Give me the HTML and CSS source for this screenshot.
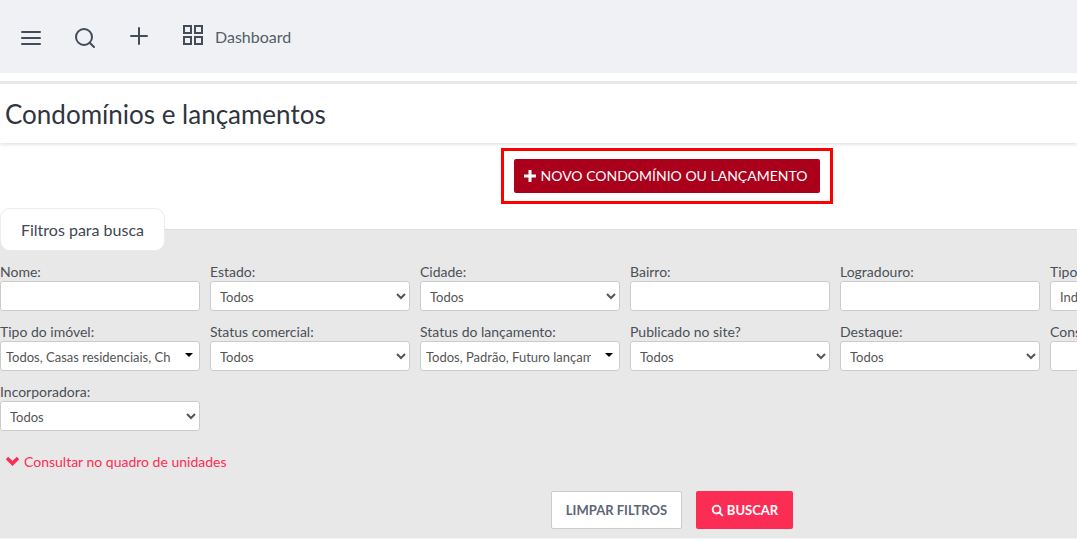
FILE: index.html
```html
<!DOCTYPE html>
<html lang="pt-BR">
<head>
<meta charset="utf-8">
<title>Condomínios e lançamentos</title>
<link rel="stylesheet" href="styles.css">
</head>
<body>
<header class="topbar">
  <svg class="icon icon-menu" viewBox="0 0 24 24"><path d="M3 6h18M3 12h18M3 18h18"/></svg>
  <svg class="icon icon-search" viewBox="0 0 24 24"><circle cx="11" cy="11" r="8"/><path d="M21 21l-4.3-4.3"/></svg>
  <svg class="icon icon-plus" viewBox="0 0 24 24"><path d="M12 4v16M4 12h16"/></svg>
  <svg class="icon icon-grid" viewBox="0 0 24 24"><rect x="3" y="3" width="7" height="7"/><rect x="14" y="3" width="7" height="7"/><rect x="3" y="14" width="7" height="7"/><rect x="14" y="14" width="7" height="7"/></svg>
  <span class="dash">Dashboard</span>
</header>
<div class="title-bar"><h1>Condomínios e lançamentos</h1></div>
<div class="action-row">
  <div class="highlight">
    <button class="btn-new" type="button"><svg class="plus-solid" viewBox="0 0 12 12"><path d="M4.500 0h3v4.500H12v3H7.500V12h-3V7.500H0v-3h4.500z"/></svg>NOVO CONDOMÍNIO OU LANÇAMENTO</button>
  </div>
</div>
<div class="tab-row"><div class="tab">Filtros para busca</div></div>
<section class="panel">
  <div class="filters">
    <div class="field"><label>Nome:</label><input type="text"></div>
    <div class="field"><label>Estado:</label><select><option>Todos</option></select></div>
    <div class="field"><label>Cidade:</label><select><option>Todos</option></select></div>
    <div class="field"><label>Bairro:</label><input type="text"></div>
    <div class="field"><label>Logradouro:</label><input type="text"></div>
    <div class="field"><label>Tipo de cadastro:</label><select><option>Indiferente</option></select></div>

    <div class="field"><label>Tipo do imóvel:</label><div class="multi"><span class="multi-text">Todos, Casas residenciais, Ch</span><i class="caret"></i></div></div>
    <div class="field"><label>Status comercial:</label><select><option>Todos</option></select></div>
    <div class="field"><label>Status do lançamento:</label><div class="multi"><span class="multi-text">Todos, Padrão, Futuro lançam</span><i class="caret"></i></div></div>
    <div class="field"><label>Publicado no site?</label><select><option>Todos</option></select></div>
    <div class="field"><label>Destaque:</label><select><option>Todos</option></select></div>
    <div class="field"><label>Construtora:</label><input type="text"></div>

    <div class="field"><label>Incorporadora:</label><select><option>Todos</option></select></div>
  </div>
  <a class="toggle"><svg class="chev" viewBox="0 0 14 10"><path d="M1.500 2l5.500 5.500L12.500 2"/></svg>Consultar no quadro de unidades</a>
  <div class="actions">
    <button class="btn-clear" type="button">LIMPAR FILTROS</button>
    <button class="btn-search" type="button"><svg class="mag" viewBox="0 0 14 14"><circle cx="6" cy="6" r="4.200"/><path d="M9 9l3.800 3.800"/></svg>BUSCAR</button>
  </div>
</section>
</body>
</html>
```

FILE: styles.css
```css
* { box-sizing: border-box; }
html, body { margin: 0; height: 541px; overflow: hidden; background: #fff; }
body { width: 1077px; font-family: Lato, "Liberation Sans", sans-serif; color: #3f4753; }

.topbar { height: 73px; background: #eff1f5; display: flex; align-items: center; padding-left: 19px; }
.icon { width: 24px; height: 24px; fill: none; stroke: #444c58; stroke-width: 2; stroke-linecap: round; flex: none; }
.icon-menu { margin-right: 30px; margin-top: 2px; }
.icon-search { margin-right: 30px; margin-top: 2px; }
.icon-plus { margin-right: 30px; margin-top: -2px; }
.icon-grid { margin-right: 10px; margin-top: -4px; }
.dash { font-size: 16px; color: #555d68; }

.title-bar { margin-top: 8px; height: 62px; padding: 0 0 0 5px; background: #fff; display: flex; align-items: center;
  border-top: 3px solid #e9e9e9; box-shadow: 0 2px 3px rgba(0,0,0,.1); }
h1 { margin: 0; font-size: 26px; font-weight: 400; color: #2f3440; }

.action-row { display: flex; padding: 5px 0 0 501px; height: 65px; }
.highlight { width: 332px; height: 56px; border: 3px solid #f00; padding: 8px 10px; }
.btn-new { width: 306px; height: 34px; border: 0; border-radius: 2px; background: #ab001c; color: #fff; font: 400 14px Lato, sans-serif;
  display: flex; align-items: center; justify-content: center; padding: 0 3px 1px 0; }
.plus-solid { width: 12px; height: 12px; fill: #fff; margin-right: 5px; }

.tab-row { height: 21px; position: relative; }
.tab { position: absolute; left: 0; top: 0; z-index: 1; width: 165px; height: 43px; background: #fff; border: 1px solid #ececec; border-radius: 10px;
  display: flex; align-items: center; justify-content: center; font-size: 16px; color: #3f4753; }

.panel { height: 310px; background: #e8e8e8; border-top: 1px solid #dcdcdc; border-bottom: 1px solid #f4f4f4; padding: 34px 0 0 0; }
.filters { display: grid; grid-template-columns: repeat(6, 200px); column-gap: 10px; row-gap: 10px; width: 1250px; }
.field { height: 50px; display: flex; flex-direction: column; }
.field label { height: 16px; line-height: 16px; margin-bottom: 1px; font-size: 14px; color: #4a5058; white-space: nowrap; }
.field input, .field select, .multi { width: 200px; height: 30px; background: #fff; border: 1px solid #ccc; border-radius: 3px; font: 400 13px Lato, sans-serif; color: #555; }
.field select { padding: 2px 0 0 5px; }
.multi { display: flex; align-items: center; padding: 2px 0 0 5px; position: relative; }
.multi-text { width: 165px; overflow: hidden; white-space: nowrap; }
.caret { position: absolute; right: 6px; top: 11px; width: 0; height: 0; border-left: 4px solid transparent; border-right: 4px solid transparent; border-top: 4px solid #000; }

.toggle { display: flex; align-items: center; margin: 19px 0 0 5px; font-size: 14px; color: #fb2d55; height: 16px; }
.chev { width: 15px; height: 10px; fill: none; stroke: #fb2d55; stroke-width: 3.500; margin-right: 4px; }

.actions { display: flex; gap: 14px; padding-left: 551px; margin-top: 22px; }
.btn-clear { width: 131px; height: 38px; background: #fff; border: 1px solid #ccc; border-radius: 2px; font: 700 13px Lato, sans-serif; color: #5e6675; padding: 0; }
.btn-search { width: 97px; height: 38px; background: #fb2d55; border: 0; border-radius: 2px; font: 700 13px Lato, sans-serif; color: #fff; padding: 0;
  display: flex; align-items: center; justify-content: center; }
.mag { width: 13px; height: 13px; fill: none; stroke: #fff; stroke-width: 2; margin-right: 3px; }
```
